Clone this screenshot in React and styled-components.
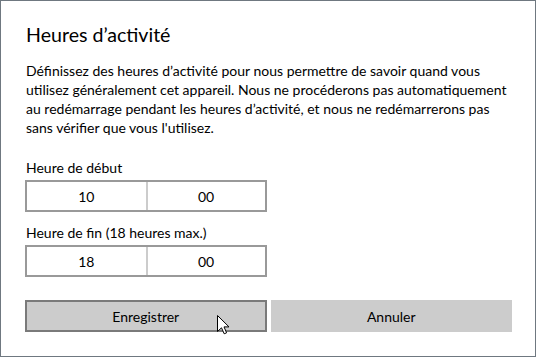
import React from "react";
import styled, { createGlobalStyle } from "styled-components";

const Global = createGlobalStyle`
  html, body { margin: 0; padding: 0; background: #ffffff; }
  body { font-family: Lato, "Noto Sans", sans-serif; color: #000; }
`;

const Window = styled.div`
  box-sizing: border-box;
  width: 536px;
  height: 357px;
  border: 1px solid #6f7880;
  background: #fff;
  padding: 20px 23px 0 24px;
  display: flex;
  flex-direction: column;
`;

const Title = styled.h1`
  margin: 0;
  padding-left: 1px;
  font-size: 19.6px;
  line-height: 28px;
  font-weight: 400;
`;

const Paragraph = styled.p`
  margin: 12px 0 0 0;
  padding-left: 1px;
  font-size: 14px;
  line-height: 19px;
  width: 488px;
`;

const Label = styled.div`
  margin-top: ${(p) => p.$top}px;
  padding-left: 1px;
  font-size: 14px;
  line-height: 20px;
`;

const Grid = styled.div`
  display: grid;
  grid-template-columns: 1fr 1fr;
  column-gap: 4px;
`;

const TimeBox = styled.div`
  box-sizing: border-box;
  height: 32px;
  margin-top: 2px;
  border: 2px solid #999999;
  display: grid;
  grid-template-columns: 1fr 1fr;
`;

const Cell = styled.div`
  display: flex;
  align-items: center;
  justify-content: center;
  font-size: 14px;
  border-left: ${(p) => (p.$divider ? "2px solid #cccccc" : "none")};
`;

const ButtonRow = styled(Grid)`
  margin-top: 23px;
  position: relative;
`;

const Button = styled.button`
  box-sizing: border-box;
  height: 32px;
  background: #cccccc;
  border: 2px solid ${(p) => (p.$focused ? "#7a7a7a" : "#cccccc")};
  font-family: inherit;
  font-size: 14px;
  color: #000;
  padding: 0;
`;

const Cursor = styled.svg`
  position: absolute;
  left: 192px;
  top: 15px;
  pointer-events: none;
`;

function TimeField({ label, top, hour, minute }) {
  return (
    <>
      <Label $top={top}>{label}</Label>
      <Grid>
        <TimeBox>
          <Cell>{hour}</Cell>
          <Cell $divider>{minute}</Cell>
        </TimeBox>
      </Grid>
    </>
  );
}

export default function App() {
  return (
    <>
      <Global />
      <Window>
        <Title>Heures d’activité</Title>
        <Paragraph>
          Définissez des heures d’activité pour nous permettre de savoir quand vous
          utilisez généralement cet appareil. Nous ne procéderons pas automatiquement
          au redémarrage pendant les heures d’activité, et nous ne redémarrerons pas
          sans vérifier que vous l'utilisez.
        </Paragraph>
        <TimeField label="Heure de début" top={21} hour="10" minute="00" />
        <TimeField label="Heure de fin (18 heures max.)" top={11} hour="18" minute="00" />
        <ButtonRow>
          <Button $focused>Enregistrer</Button>
          <Button>Annuler</Button>
          <Cursor width="13" height="20" viewBox="0 0 13 20">
            <path
              d="M0.5 0.5 L0.5 16.5 L4.5 12.8 L7.2 18.8 L9.6 17.8 L7 11.9 L12 11.9 Z"
              fill="#fff"
              stroke="#000"
              strokeWidth="1"
              strokeLinejoin="miter"
            />
          </Cursor>
        </ButtonRow>
      </Window>
    </>
  );
}
